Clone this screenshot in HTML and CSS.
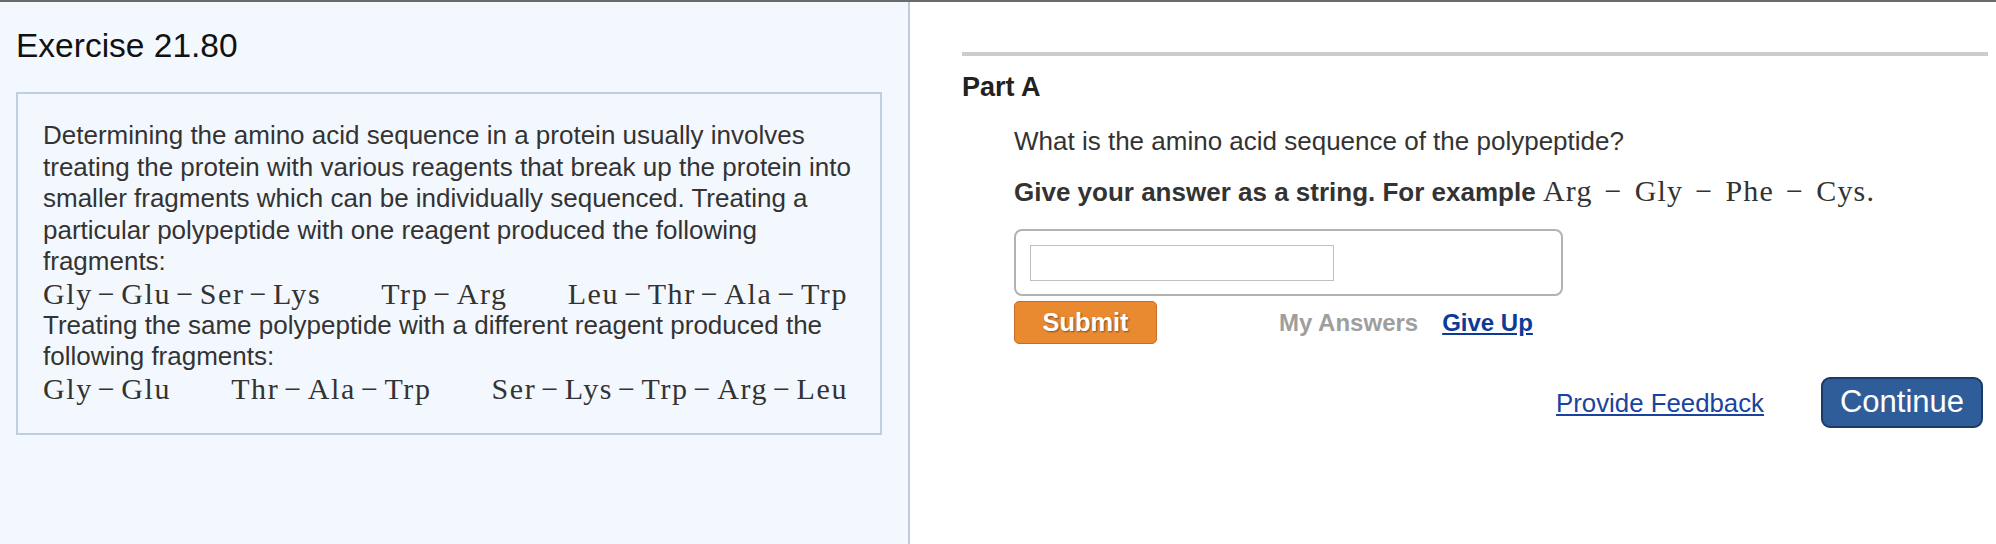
FILE: index.html
```html
<!DOCTYPE html>
<html lang="en">
<head>
<meta charset="utf-8">
<title>Exercise 21.80</title>
<link rel="stylesheet" href="styles.css">
</head>
<body>
<div class="page">
  <section class="left">
    <h1 class="title">Exercise 21.80</h1>
    <div class="intro">
      <p class="txt">Determining the amino acid sequence in a protein usually involves treating the protein with various reagents that break up the protein into smaller fragments which can be individually sequenced. Treating a particular polypeptide with one reagent produced the following fragments:</p>
      <div class="frags">
        <span class="frag">Gly<span class="op">−</span>Glu<span class="op">−</span>Ser<span class="op">−</span>Lys</span>
        <span class="frag">Trp<span class="op">−</span>Arg</span>
        <span class="frag">Leu<span class="op">−</span>Thr<span class="op">−</span>Ala<span class="op">−</span>Trp</span>
      </div>
      <p class="txt">Treating the same polypeptide with a different reagent produced the following fragments:</p>
      <div class="frags">
        <span class="frag">Gly<span class="op">−</span>Glu</span>
        <span class="frag">Thr<span class="op">−</span>Ala<span class="op">−</span>Trp</span>
        <span class="frag">Ser<span class="op">−</span>Lys<span class="op">−</span>Trp<span class="op">−</span>Arg<span class="op">−</span>Leu</span>
      </div>
    </div>
  </section>
  <section class="right">
    <div class="rule"></div>
    <h2 class="part">Part A</h2>
    <div class="question">
      <p class="q q-first">What is the amino acid sequence of the polypeptide?</p>
      <p class="q q-bold">Give your answer as a string. For example <span class="mth">Arg<span class="bop">−</span>Gly<span class="bop">−</span>Phe<span class="bop">−</span>Cys.</span></p>
      <div class="answer"><input class="field" type="text" aria-label="answer"></div>
      <div class="actions">
        <button class="submit" type="button">Submit</button>
        <span class="myans">My Answers</span>
        <a class="giveup" href="#">Give Up</a>
      </div>
    </div>
    <div class="footer">
      <a class="feedback" href="#">Provide Feedback</a>
      <button class="continue" type="button">Continue</button>
    </div>
  </section>
</div>
</body>
</html>
```
FILE: styles.css
```css
html, body {
  margin: 0;
  padding: 0;
  background: #ffffff;
}
body {
  font-family: "Liberation Sans", Arial, sans-serif;
  color: #333333;
}
.page {
  display: flex;
  height: 544px;
  box-sizing: border-box;
  border-top: 2px solid #6a6a6a;
}
.left {
  width: 910px;
  flex: none;
  box-sizing: border-box;
  background: #f3f8fe;
  border-right: 2px solid #bccde1;
  padding: 24.5px 0 0 16px;
}
.title {
  margin: 0;
  font-weight: normal;
  font-size: 33.5px;
  line-height: 38px;
  color: #111111;
}
.intro {
  margin-top: 27.5px;
  width: 866px;
  box-sizing: border-box;
  border: 2px solid #bfcfe3;
  padding: 26px 14px 28.6px 25px;
  background: #f3f8fe;
}
.txt {
  margin: 0;
  font-size: 26px;
  line-height: 31.6px;
  color: #333333;
}
.frags {
  display: flex;
  gap: 60px;
  height: 31.6px;
  line-height: 31.6px;
  white-space: nowrap;
  font-family: "Liberation Serif", "Times New Roman", serif;
  font-size: 30px;
  letter-spacing: 1.6px;
  color: #333333;
}
.op {
  margin: 0 5px;
}
.right {
  flex: 1;
  padding: 50px 8px 0 52px;
}
.rule {
  height: 4px;
  background: #cccccc;
}
.part {
  margin: 14.65px 0 0;
  font-size: 27px;
  line-height: 32px;
  font-weight: bold;
  color: #222222;
}
.question {
  margin-left: 52px;
}
.q {
  margin: 19px 0 0;
  font-size: 26px;
  line-height: 32px;
  color: #333333;
}
.q-first {
  margin-top: 22.35px;
}
.q-bold {
  font-weight: bold;
}
.mth {
  font-family: "Liberation Serif", "Times New Roman", serif;
  font-weight: normal;
  font-size: 30px;
  line-height: 1;
  letter-spacing: 1.2px;
}
.bop {
  margin: 0 12px;
}
.answer {
  margin-top: 21px;
  width: 549px;
  height: 67px;
  box-sizing: border-box;
  border: 2px solid #b2b2b2;
  border-radius: 8px;
  padding: 14px 0 0 14px;
  background: #ffffff;
}
.field {
  display: block;
  margin: 0;
  padding: 0;
  width: 304px;
  height: 36px;
  box-sizing: border-box;
  border: 1px solid #bfbfbf;
  border-radius: 0;
  background: #ffffff;
  outline: none;
}
.actions {
  display: flex;
  align-items: baseline;
  margin-top: 5px;
}
.submit {
  width: 143px;
  height: 43px;
  box-sizing: border-box;
  padding: 0;
  margin: 0;
  background: #ea8a30;
  border: 1.5px solid #c56e27;
  border-radius: 5px;
  color: #ffffff;
  font-family: "Liberation Sans", Arial, sans-serif;
  font-weight: bold;
  font-size: 25.4px;
  text-shadow: 1px 1px 2px rgba(0, 0, 0, 0.45);
}
.myans {
  margin-left: 122px;
  font-size: 24px;
  font-weight: bold;
  color: #9e9e9e;
}
.giveup {
  margin-left: 24px;
  font-size: 24px;
  font-weight: bold;
  color: #0c3a98;
  text-decoration: underline;
}
.footer {
  display: flex;
  justify-content: flex-end;
  align-items: baseline;
  margin-top: 33px;
  padding-right: 5px;
}
.feedback {
  margin-right: 57px;
  font-size: 25.8px;
  color: #1a43a0;
  text-decoration: underline;
}
.continue {
  width: 162px;
  height: 51px;
  box-sizing: border-box;
  padding: 0;
  margin: 0;
  background: #2f5d9a;
  border: 2px solid #1a3a68;
  border-radius: 9px;
  color: #ffffff;
  font-family: "Liberation Sans", Arial, sans-serif;
  font-size: 31px;
}
```
